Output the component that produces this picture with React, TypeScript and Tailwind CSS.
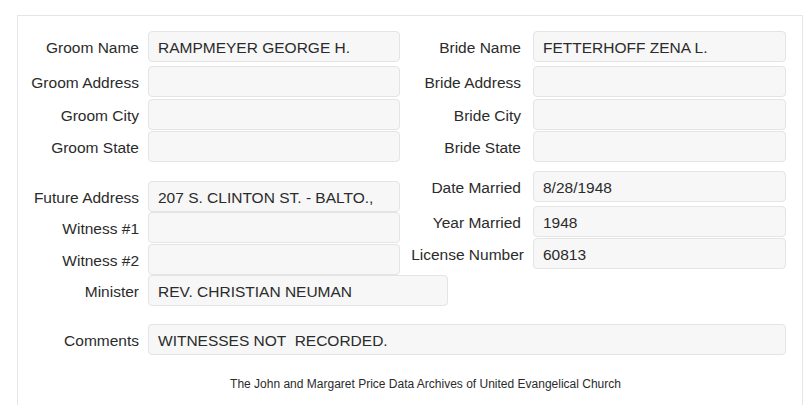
import React from 'react';

type RowProps = {
  label: string;
  value?: string;
  labelW?: string;
  boxW?: string;
  gap?: string;
  className?: string;
};

const Row: React.FC<RowProps> = ({ label, value = '', labelW = 'w-[121px]', boxW = 'w-[252px]', gap = 'ml-[9px]', className = '' }) => (
  <div className={`flex items-center ${className}`}>
    <div className={`${labelW} shrink-0 pt-[3px] text-right whitespace-nowrap`}>{label}</div>
    <div className={`${gap} ${boxW} h-[31px] shrink-0 flex items-center pl-[9px] pt-[2px] bg-[#f7f7f7] border border-[#e4e4e4] rounded-[4px] whitespace-pre`}>
      {value}
    </div>
  </div>
);

const App: React.FC = () => {
  return (
    <div className="w-[805px] h-[405px] overflow-hidden bg-white text-[#2b2b2b] text-[15.5px] font-['Liberation_Sans',Arial,sans-serif]">
      <div className="ml-[17px] mt-[15px] w-[786px] h-[400px] border border-b-0 border-[#e6e6e6] pt-[15px]">
        {/* names & addresses */}
        <div className="flex">
          <div className="w-[382px] flex flex-col">
            <Row label="Groom Name" value="RAMPMEYER GEORGE H." />
            <Row label="Groom Address" className="mt-[4px]" />
            <Row label="Groom City" className="mt-[2px]" />
            <Row label="Groom State" className="mt-[1px]" />
          </div>
          <div className="flex flex-col">
            <Row label="Bride Name" value="FETTERHOFF ZENA L." gap="ml-[12px]" boxW="w-[253px]" />
            <Row label="Bride Address" className="mt-[4px]" gap="ml-[12px]" boxW="w-[253px]" />
            <Row label="Bride City" className="mt-[2px]" gap="ml-[12px]" boxW="w-[253px]" />
            <Row label="Bride State" className="mt-[1px]" gap="ml-[12px]" boxW="w-[253px]" />
          </div>
        </div>

        {/* marriage details */}
        <div className="flex items-start">
          <div className="w-[382px] flex flex-col mt-[19px]">
            <Row label="Future Address" value="207 S. CLINTON ST. - BALTO.," />
            <Row label="Witness #1" />
            <Row label="Witness #2" className="mt-[1px]" />
          </div>
          <div className="flex flex-col mt-[9px]">
            <Row label="Date Married" value="8/28/1948" gap="ml-[12px]" boxW="w-[253px]" />
            <Row label="Year Married" value="1948" className="mt-[4px]" gap="ml-[12px]" boxW="w-[253px]" />
            <Row label="License Number" value="60813" className="mt-[1px]" labelW="w-[124px]" gap="ml-[9px]" boxW="w-[253px]" />
          </div>
        </div>
        <Row label="Minister" value="REV. CHRISTIAN NEUMAN" boxW="w-[300px]" />

        <Row label="Comments" value="WITNESSES NOT  RECORDED." boxW="w-[638px]" className="mt-[18px]" />

        <p className="mt-[21px] pl-[31px] text-center text-[12px] leading-[16px]">
          The John and Margaret Price Data Archives of United Evangelical Church
        </p>
      </div>
    </div>
  );
};

export default App;
